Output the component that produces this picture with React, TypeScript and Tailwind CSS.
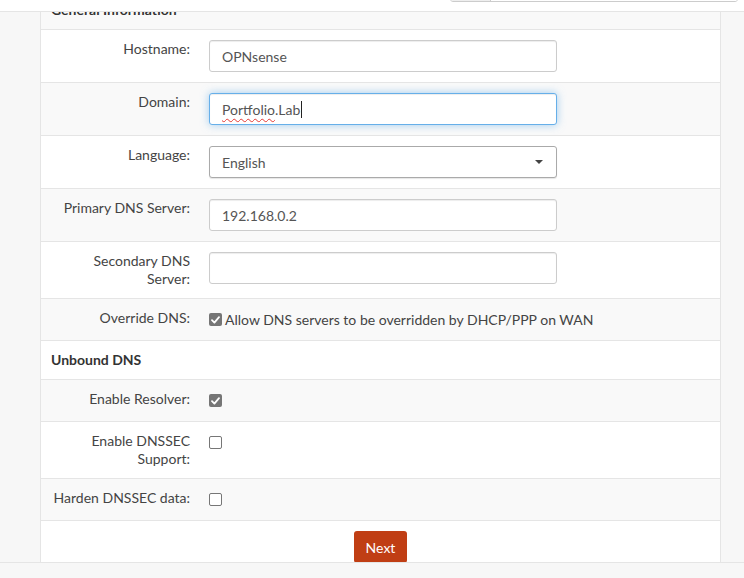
import React from 'react';

type RowProps = {
  label?: string;
  striped?: boolean;
  children?: React.ReactNode;
};

function Row({ label, striped, children }: RowProps) {
  return (
    <div className={`flex border-b border-[#e5e5e5] ${striped ? 'bg-[#f9f9f9]' : 'bg-white'}`}>
      <div className="w-[159px] shrink-0 py-[10px] pr-[10px] pl-[8px] text-right text-[14px] leading-[18px] text-[#444]">
        {label}
      </div>
      <div className="flex-1 py-[10px] pl-[9px]">{children}</div>
    </div>
  );
}

function Section({ title, striped }: { title: string; striped?: boolean }) {
  return (
    <div className={`border-b border-[#e5e5e5] px-[10px] py-[10px] text-[14px] font-bold leading-[18px] text-[#333] ${striped ? 'bg-[#f9f9f9]' : 'bg-white'}`}>
      {title}
    </div>
  );
}

function TextBox({ children, focused }: { children?: React.ReactNode; focused?: boolean }) {
  return (
    <div
      className={`flex h-[32px] w-[348px] items-center rounded-[3px] border bg-white pl-[12px] text-[14px] text-[#555] ${
        focused
          ? 'border-[#66afe9] shadow-[inset_0_1px_1px_rgba(0,0,0,0.075),0_0_8px_rgba(102,175,233,0.6)]'
          : 'border-[#ccc] shadow-[inset_0_1px_1px_rgba(0,0,0,0.075)]'
      }`}
    >
      {children}
    </div>
  );
}

function Check({ checked }: { checked?: boolean }) {
  return checked ? (
    <span className="inline-flex h-[13px] w-[13px] shrink-0 items-center justify-center rounded-[2px] bg-[#767676]">
      <svg width="9" height="8" viewBox="0 0 9 8" fill="none">
        <path d="M1 4.2 L3.4 6.6 L8 1.2" stroke="white" strokeWidth="1.8" strokeLinecap="round" strokeLinejoin="round" />
      </svg>
    </span>
  ) : (
    <span className="inline-block h-[13px] w-[13px] shrink-0 rounded-[2px] border border-[#767676] bg-white" />
  );
}

export default function App() {
  return (
    <div className="relative h-[578px] w-[744px] overflow-hidden bg-[#f7f7f7] font-['Lato','Liberation_Sans',sans-serif]">
      {/* top bar, page is scrolled under it */}
      <div className="absolute left-0 right-0 top-0 z-10 h-[12px] overflow-hidden border-b border-[#e5e5e5] bg-white">
        <div className="ml-[450px] mt-[-30px] flex h-[32px] w-[288px] overflow-hidden rounded-[3px] border border-[#ccc]">
          <div className="w-[40px] border-r border-[#ccc] bg-[#eee]" />
          <div className="flex-1 bg-white" />
        </div>
      </div>

      <div className="ml-[40px] mt-[-9px] w-[681px] border-x border-[#e5e5e5] bg-white">
        <Section title="General Information" striped />
        <Row label="Hostname:">
          <TextBox>OPNsense</TextBox>
        </Row>
        <Row label="Domain:" striped>
          <TextBox focused>
            <span className="underline decoration-[#e53935] decoration-wavy decoration-1 underline-offset-[3px]">Portfolio</span>
            <span>.Lab</span>
            <span className="ml-[1px] inline-block h-[17px] w-[1px] bg-[#222]" />
          </TextBox>
        </Row>
        <Row label="Language:">
          <div className="flex h-[32px] w-[348px] items-center justify-between rounded-[3px] border border-[#aaa] bg-white pl-[12px] pr-[13px] text-[14px] text-[#555] shadow-[0_1px_1px_rgba(0,0,0,0.1)]">
            <span>English</span>
            <span className="h-0 w-0 border-x-[4px] border-t-[4px] border-x-transparent border-t-[#444]" />
          </div>
        </Row>
        <Row label="Primary DNS Server:" striped>
          <TextBox>192.168.0.2</TextBox>
        </Row>
        <Row label="Secondary DNS Server:">
          <TextBox />
        </Row>
        <Row label="Override DNS:" striped>
          <div className="flex h-[21px] items-center gap-[3px] text-[14px] text-[#444]">
            <Check checked />
            <span>Allow DNS servers to be overridden by DHCP/PPP on WAN</span>
          </div>
        </Row>
        <Section title="Unbound DNS" />
        <Row label="Enable Resolver:" striped>
          <div className="flex h-[21px] items-center">
            <Check checked />
          </div>
        </Row>
        <Row label="Enable DNSSEC Support:">
          <div className="flex h-[21px] items-center">
            <Check />
          </div>
        </Row>
        <Row label="Harden DNSSEC data:" striped>
          <div className="flex h-[21px] items-center">
            <Check />
          </div>
        </Row>
        <div className="flex justify-center bg-white py-[10px]">
          <button className="h-[32px] rounded-[3px] bg-[#c03e14] px-[12px] text-[14px] text-white">Next</button>
        </div>
      </div>

      {/* footer strip */}
      <div className="absolute bottom-0 left-0 right-0 z-10 h-[16px] border-t border-[#e5e5e5] bg-[#f7f7f7]" />
    </div>
  );
}
